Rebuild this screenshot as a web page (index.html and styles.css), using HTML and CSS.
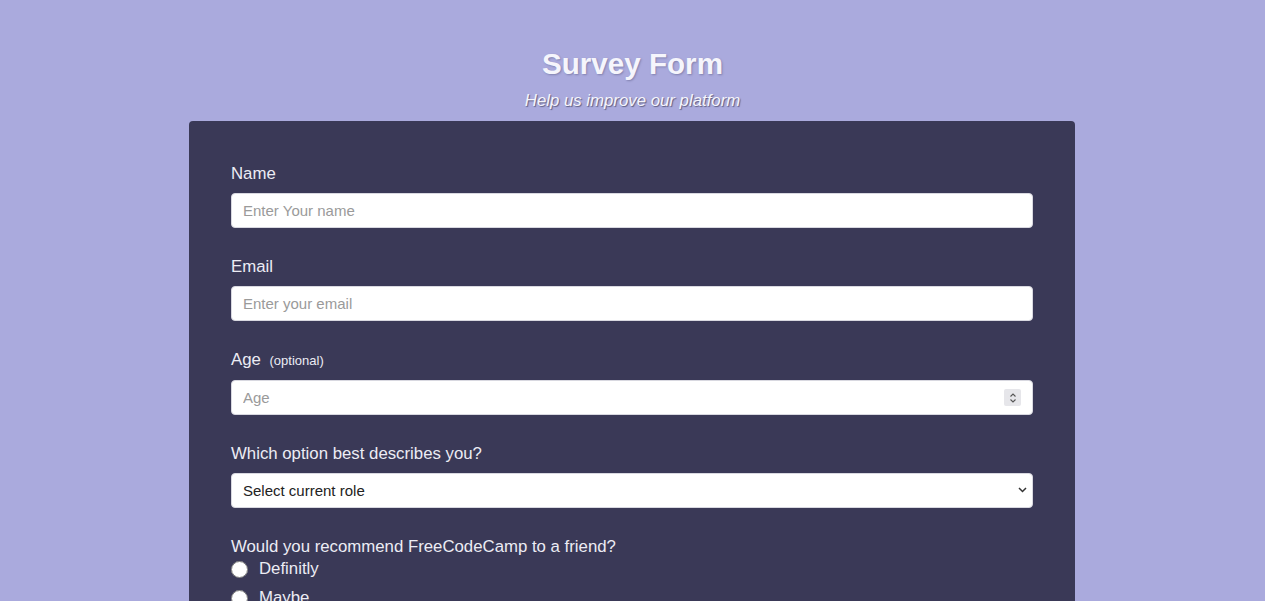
FILE: index.html
```html
<!DOCTYPE html>
<html lang="en">
<head>
<meta charset="utf-8">
<title>Survey Form</title>
<link rel="stylesheet" href="styles.css">
</head>
<body>
<header class="header">
  <h1 class="title">Survey Form</h1>
  <p class="subtitle">Help us improve our platform</p>
</header>
<main class="card">
  <form class="form">
    <div class="group">
      <label class="label" for="name">Name</label>
      <input class="field" id="name" type="text" placeholder="Enter Your name">
    </div>
    <div class="group">
      <label class="label" for="email">Email</label>
      <input class="field" id="email" type="email" placeholder="Enter your email">
    </div>
    <div class="group">
      <label class="label" for="age">Age <span class="hint">(optional)</span></label>
      <div class="wrap">
        <input class="field number" id="age" type="number" placeholder="Age">
        <span class="spinner"><svg width="8" height="12" viewBox="0 0 8 12"><path d="M1.5 4.5 L4 2 L6.5 4.5 M1.5 7.5 L4 10 L6.5 7.5" fill="none" stroke="#555" stroke-width="1.1"/></svg></span>
      </div>
    </div>
    <div class="group">
      <label class="label" for="role">Which option best describes you?</label>
      <div class="wrap">
        <select class="field select" id="role">
          <option>Select current role</option>
          <option>Student</option>
          <option>Full Time Job</option>
        </select>
        <span class="chevron"><svg width="9" height="6" viewBox="0 0 9 6"><path d="M1 1 L4.5 4.5 L8 1" fill="none" stroke="#333" stroke-width="1.5"/></svg></span>
      </div>
    </div>
    <div class="group">
      <p class="label question">Would you recommend FreeCodeCamp to a friend?</p>
      <label class="radio"><input type="radio" name="rec" class="radio-input"> Definitly</label>
      <label class="radio"><input type="radio" name="rec" class="radio-input"> Maybe</label>
      <label class="radio"><input type="radio" name="rec" class="radio-input"> Not sure</label>
    </div>
  </form>
</main>
</body>
</html>
```
FILE: styles.css
```css
html, body {
  margin: 0;
  padding: 0;
}
body {
  background: #aaaadd;
  font-family: "Liberation Sans", Arial, sans-serif;
  color: #ececf4;
}
.header {
  text-align: center;
  padding-top: 47px;
}
.title {
  margin: 0;
  font-size: 29.6px;
  line-height: 34px;
  font-weight: bold;
  color: #f5f5fc;
  text-shadow: 1px 1px 2px rgba(80, 80, 120, 0.45);
}
.subtitle {
  margin: 10px 0 10px;
  font-size: 16.8px;
  line-height: 20px;
  font-style: italic;
  color: #f5f5fc;
  text-shadow: 1px 1px 1px rgba(60, 60, 90, 0.7);
}
.card {
  width: 886px;
  margin: 0 auto;
  background: #3a3957;
  border-radius: 4px;
  padding: 43px 42px 40px;
  box-sizing: border-box;
  position: relative;
  left: -0.5px;
}
.form {
  display: flex;
  flex-direction: column;
}
.group {
  display: flex;
  flex-direction: column;
  margin-bottom: 29px;
}
.label {
  font-size: 16.8px;
  line-height: 19px;
  margin: 0 0 10px;
  color: #ececf4;
}
.hint {
  font-size: 13px;
  margin-left: 4px;
}
.wrap {
  position: relative;
  display: flex;
}
.field {
  height: 35px;
  box-sizing: border-box;
  border: 1px solid #d8d8e0;
  border-radius: 4px;
  background: #fff;
  padding: 0 11px;
  font-family: "Liberation Sans", Arial, sans-serif;
  font-size: 15px;
  color: #222;
  width: 100%;
}
.field::placeholder {
  color: #9a9a9a;
}
.number {
  -moz-appearance: textfield;
}
.number::-webkit-inner-spin-button,
.number::-webkit-outer-spin-button {
  -webkit-appearance: none;
  margin: 0;
}
.spinner {
  position: absolute;
  right: 12px;
  top: 9px;
  width: 17px;
  height: 17px;
  background: #e6e6ea;
  border-radius: 2px;
  display: flex;
  align-items: center;
  justify-content: center;
  pointer-events: none;
}
.select {
  -webkit-appearance: none;
  appearance: none;
  color: #222;
}
.chevron {
  position: absolute;
  right: 6px;
  top: 14px;
  display: flex;
  pointer-events: none;
}
.question {
  margin-bottom: 3px;
}
.radio {
  display: flex;
  align-items: center;
  font-size: 16.8px;
  line-height: 20px;
  margin-bottom: 9px;
  color: #ececf4;
}
.radio-input {
  width: 17px;
  height: 17px;
  margin: 0 11px 0 0;
}
```
